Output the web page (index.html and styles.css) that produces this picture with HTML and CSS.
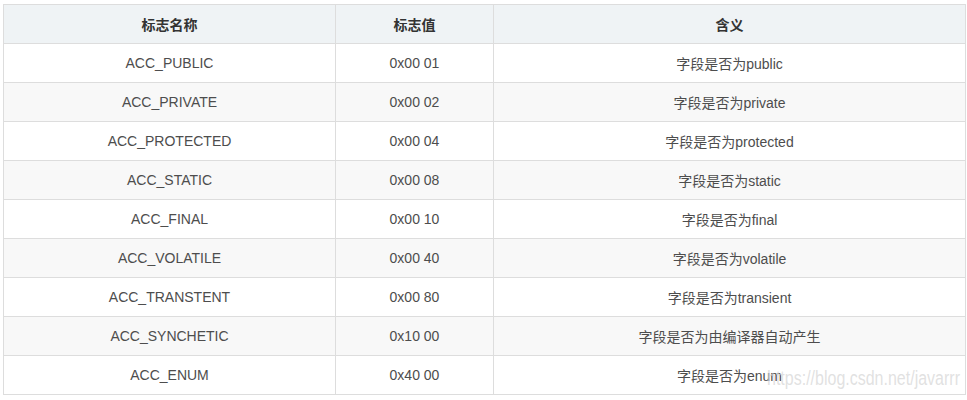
FILE: index.html
```html
<!DOCTYPE html>
<html>
<head>
<meta charset="utf-8">
<link rel="stylesheet" href="styles.css">
</head>
<body>
<div class="wrap">
<table class="flags">
<colgroup><col class="c1"><col class="c2"><col class="c3"></colgroup>
<thead>
<tr><th>标志名称</th><th>标志值</th><th>含义</th></tr>
</thead>
<tbody>
<tr><td>ACC_PUBLIC</td><td>0x00 01</td><td>字段是否为public</td></tr>
<tr><td>ACC_PRIVATE</td><td>0x00 02</td><td>字段是否为private</td></tr>
<tr><td>ACC_PROTECTED</td><td>0x00 04</td><td>字段是否为protected</td></tr>
<tr><td>ACC_STATIC</td><td>0x00 08</td><td>字段是否为static</td></tr>
<tr><td>ACC_FINAL</td><td>0x00 10</td><td>字段是否为final</td></tr>
<tr><td>ACC_VOLATILE</td><td>0x00 40</td><td>字段是否为volatile</td></tr>
<tr><td>ACC_TRANSTENT</td><td>0x00 80</td><td>字段是否为transient</td></tr>
<tr><td>ACC_SYNCHETIC</td><td>0x10 00</td><td>字段是否为由编译器自动产生</td></tr>
<tr><td>ACC_ENUM</td><td>0x40 00</td><td>字段是否为enum</td></tr>
</tbody>
</table>
<div class="watermark">https://blog.csdn.net/javarrr</div>
</div>
</body>
</html>
```
FILE: styles.css
```css
html, body {
  margin: 0;
  padding: 0;
  background: #ffffff;
}
.wrap {
  position: relative;
  padding: 4px 0 0 3px;
}
.flags {
  border-collapse: collapse;
  table-layout: fixed;
  width: 962px;
  font-family: "Liberation Sans", "Noto Sans CJK SC", sans-serif;
  font-size: 14px;
  color: #4d4d4d;
}
.c1 { width: 332px; }
.c2 { width: 158px; }
.c3 { width: 472px; }
.flags th, .flags td {
  border: 1px solid #dddddd;
  height: 39px;
  padding: 0 8px;
  text-align: center;
  vertical-align: middle;
  box-sizing: border-box;
}
.flags th {
  background: #eff3f5;
  font-weight: bold;
  color: #333333;
}
.flags tbody tr:nth-child(even) td {
  background: #f8f8f8;
}
.watermark {
  position: absolute;
  left: 767px;
  top: 367px;
  font-family: "Liberation Sans", sans-serif;
  font-size: 20px;
  line-height: 23px;
  color: rgba(215, 215, 215, 0.75);
  white-space: nowrap;
  transform: scaleX(0.8);
  transform-origin: left top;
  pointer-events: none;
}
```
